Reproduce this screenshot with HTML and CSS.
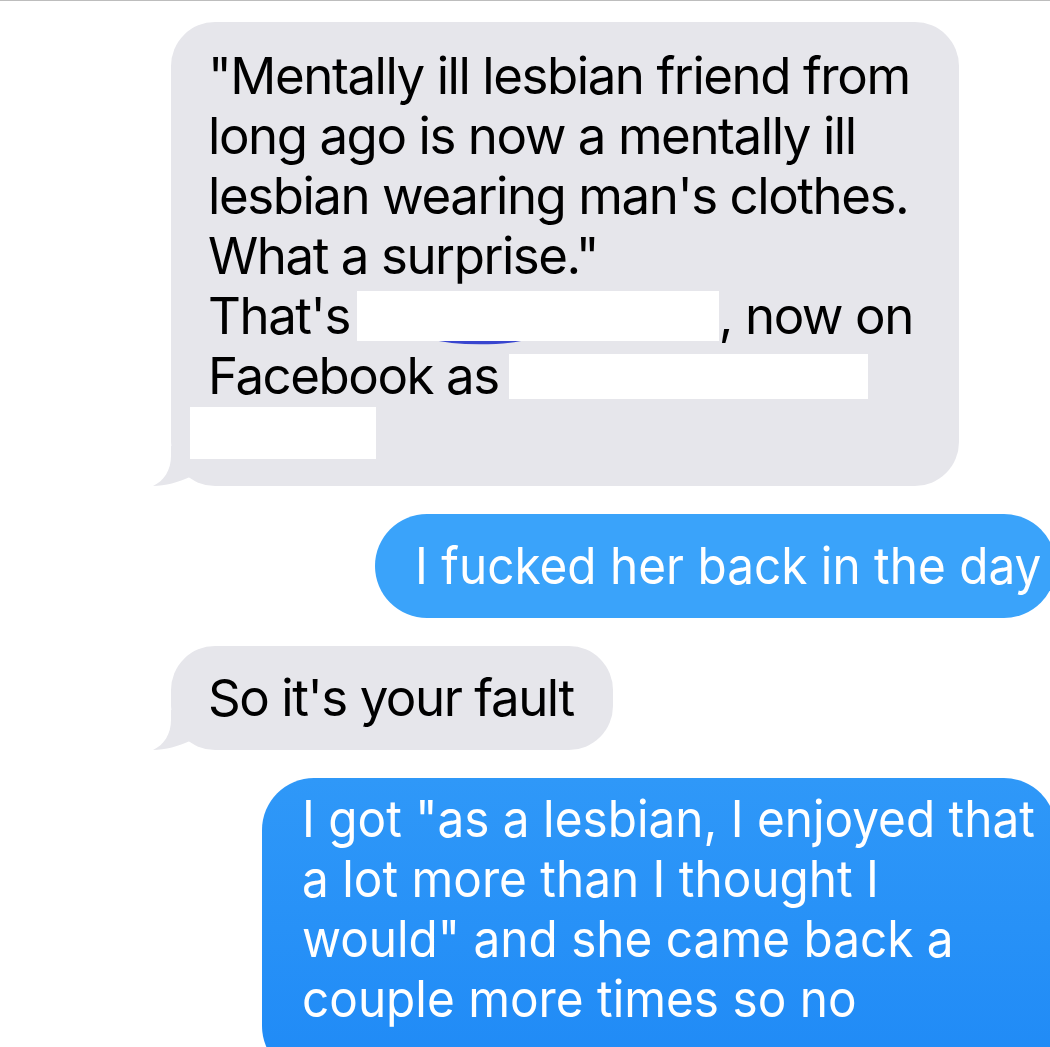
FILE: index.html
```html
<!DOCTYPE html>
<html>
<head>
<title>Messages</title>
<meta name="viewport" content="width=device-width, initial-scale=1.0">
<link rel="stylesheet" href="styles.css">
</head>
<body>

<div class="screen">
  <div class="thread">

    <div class="msg in first">
      <p>"Mentally ill lesbian friend from<br>
      long ago is now a mentally ill<br>
      lesbian wearing man's clothes.<br>
      What a surprise."<br>
      That's <span class="redact r1"><svg class="scribble" width="120" height="20" viewBox="0 0 120 20"><path d="M6 6 C 30 13, 80 13, 104 6" fill="none" stroke="#3946cf" stroke-width="6" stroke-linecap="round"/></svg></span>, now on<br>
      Facebook as <span class="redact r2"></span><br>
      <span class="redact r3"></span></p>
      <svg class="tail" width="60" height="40" viewBox="0 0 60 40"><path d="M18 0 L18 10 C18 24, 11 35, 0 40 C12 40, 26 36, 37 31 L37 0 Z" fill="#e6e6eb"/></svg>
    </div>

    <div class="msg out one">
      <p><span class="squeeze">I fucked her back in the day</span></p>
    </div>

    <div class="msg in short">
      <p>So it's your fault</p>
      <svg class="tail" width="60" height="40" viewBox="0 0 60 40"><path d="M18 0 L18 10 C18 24, 11 35, 0 40 C12 40, 26 36, 37 31 L37 0 Z" fill="#e6e6eb"/></svg>
    </div>

    <div class="msg out two">
      <p><span class="squeeze">I got "as a lesbian, I enjoyed that<br>
      a lot more than I thought I<br>
      would" and she came back a<br>
      couple more times so no</span></p>
    </div>

  </div>
</div>

</body>
</html>
```

FILE: styles.css
```css
body {
  margin: 0;
  background: #fff;
  font-family: Inter, "Liberation Sans", sans-serif;
}
.screen {
  width: 1050px;
  height: 1047px;
  overflow: hidden;
  border-top: 1px solid #bdbdbd;
  box-sizing: border-box;
}
.thread {
  display: flex;
  flex-direction: column;
  gap: 28px;
  padding-top: 21px;
}
.msg {
  position: relative;
  z-index: 0;
  box-sizing: border-box;
  border-radius: 44px;
}
.msg p {
  margin: 0;
  font-size: 51px;
  line-height: 60px;
  white-space: nowrap;
}

/* bulles grises (recues) */
.in {
  background: #e6e6eb;
  color: #000;
  margin-left: 171px;
}
.in p {
  letter-spacing: -1.45px;
}
.in.first {
  width: 788px;
  padding: 24px 40px 20px 37px;
}
.in.short {
  width: 442px;
  height: 104px;
  padding: 22px 30px 22px 37px;
}
.tail {
  position: absolute;
  left: -18px;
  bottom: 0;
}

/* bulles bleues (envoyees) */
.out {
  color: #fff;
  border-radius: 52px;
  padding-left: 40px;
}
.out.one {
  margin-left: 375px;
  width: 681px;
  height: 104px;
  padding-top: 22px;
  background: #3aa3fa;
}
.out.two {
  margin-left: 262px;
  width: 794px;
  height: 300px;
  padding-top: 11px;
  background: linear-gradient(#2f98f8, #1f8af6);
}
.squeeze {
  display: inline-block;
  transform: scaleX(0.936);
  transform-origin: left center;
}

/* zones masquees */
.redact {
  display: inline-block;
  vertical-align: top;
  background: #fff;
  position: relative;
}
.r1 {
  width: 362px;
  height: 50px;
  margin-top: 5px;
  margin-left: -6px;
}
.r2 {
  width: 359px;
  height: 45px;
  margin-top: 8px;
  margin-left: -3px;
}
.r3 {
  width: 186px;
  height: 52px;
  margin-top: 1px;
  margin-left: -18px;
}
.scribble {
  position: absolute;
  left: 68px;
  top: 39px;
  z-index: -1;
}
```
